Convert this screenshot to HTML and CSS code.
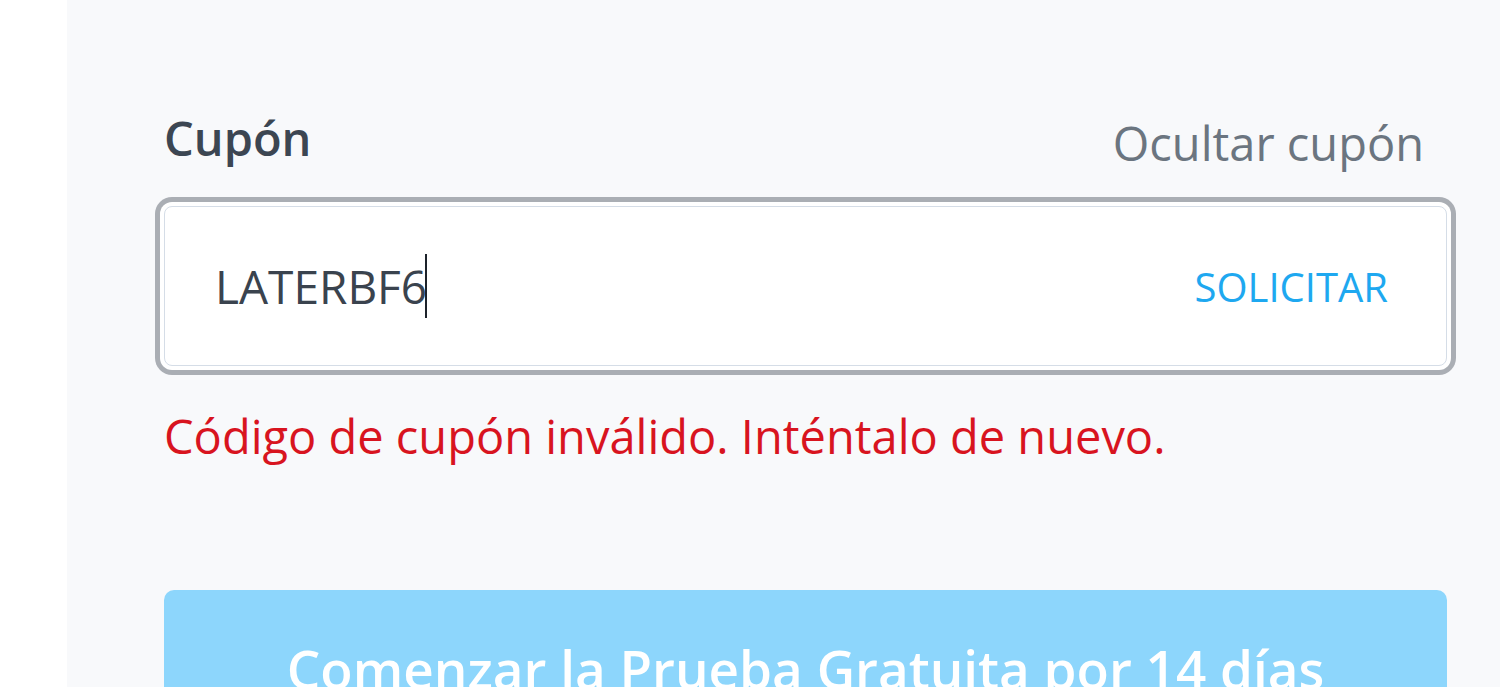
FILE: index.html
```html
<!DOCTYPE html>
<html lang="es">
<head>
<meta charset="utf-8">
<title>Cupón</title>
<link rel="stylesheet" href="styles.css">
</head>
<body>
<main class="panel">
  <div class="label-row">
    <label class="label">Cupón</label>
    <a class="toggle">Ocultar cupón</a>
  </div>
  <div class="field">
    <div class="input">
      <span class="value">LATERBF6</span><span class="caret"></span>
    </div>
    <button class="apply">SOLICITAR</button>
  </div>
  <p class="error">Código de cupón inválido. Inténtalo de nuevo.</p>
  <button class="cta">Comenzar la Prueba Gratuita por 14 días</button>
</main>
</body>
</html>
```

FILE: styles.css
```css
html, body {
  margin: 0;
  padding: 0;
  background: #ffffff;
  height: 100%;
  overflow: hidden;
}

.panel {
  margin-left: 67px;
  min-height: 100vh;
  background: #f8f9fb;
  padding: 108px 53px 0 97px;
  box-sizing: border-box;
  font-family: "Open Sans", "Noto Sans", sans-serif;
  display: flex;
  flex-direction: column;
}

.label-row {
  display: flex;
  justify-content: space-between;
  align-items: flex-start;
  height: 60px;
  line-height: 60px;
}

.label {
  font-size: 47px;
  font-weight: 600;
  color: #3c4652;
}

.toggle {
  font-size: 47px;
  color: #6b7580;
  margin-right: 23px;
  padding-top: 5px;
  cursor: pointer;
}

.field {
  margin-top: 38px;
  height: 160px;
  box-sizing: border-box;
  border: 1px solid #d5dde7;
  border-radius: 8px;
  background: #ffffff;
  box-shadow: 0 0 0 4px #ffffff, 0 0 0 9px #aaaeb4;
  display: flex;
  align-items: center;
  justify-content: space-between;
  padding: 0 58px 0 50px;
}

.input {
  display: flex;
  align-items: center;
  font-size: 46px;
  color: #3a434e;
}

.caret {
  display: inline-block;
  width: 2px;
  height: 64px;
  background: #1d232b;
  margin-left: -2px;
}

.apply {
  border: 0;
  background: none;
  padding: 0;
  font-family: inherit;
  font-size: 40px;
  color: #1ea8f0;
  cursor: pointer;
}

.error {
  margin: 40px 0 0;
  font-size: 47px;
  line-height: 60px;
  color: #d8141f;
}

.cta {
  margin-top: 124px;
  height: 150px;
  border: 0;
  border-radius: 10px;
  background: #8dd6fc;
  color: #ffffff;
  font-family: inherit;
  font-size: 53px;
  font-weight: 600;
  padding: 42px 0 0;
  display: flex;
  justify-content: center;
  align-items: flex-start;
}
```
